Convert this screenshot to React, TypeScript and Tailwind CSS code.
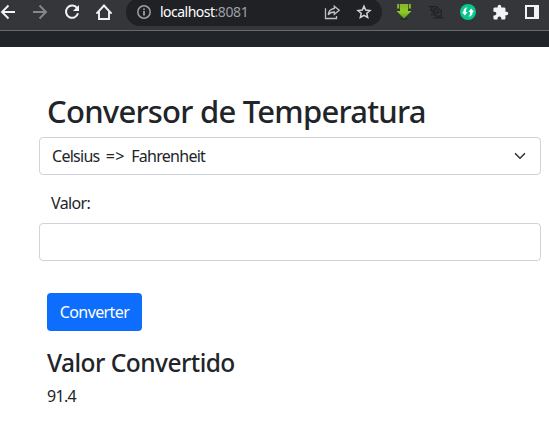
import type { ReactNode } from "react";

function Slot({ children }: { children: ReactNode }) {
  return <span className="flex h-6 w-8 shrink-0 items-center justify-center">{children}</span>;
}

function BackIcon({ className }: { className: string }) {
  return (
    <svg viewBox="0 0 16 16" className={className} fill="none" stroke="currentColor" strokeWidth="1.9">
      <path d="M15 8H2.2M8.5 1.5 2 8l6.5 6.5" />
    </svg>
  );
}

function ReloadIcon() {
  return (
    <svg viewBox="0 0 16 16" className="size-4 text-[#f1f3f4]" fill="none">
      <path d="M13.1 4.2A6.1 6.1 0 1 0 14 9.3" stroke="currentColor" strokeWidth="2" />
      <path d="M15 .9V7H8.9z" fill="currentColor" />
    </svg>
  );
}

function HomeIcon() {
  return (
    <svg viewBox="0 0 16 16" className="size-4 text-[#f1f3f4]" fill="none" stroke="currentColor" strokeWidth="1.9">
      <path d="M1.3 8.8H3V15h10V8.8h1.7L8 1.5z" />
    </svg>
  );
}

function InfoIcon() {
  return (
    <svg viewBox="0 0 16 16" className="size-4 text-[#9aa0a6]" fill="none" stroke="currentColor" strokeWidth="1.5">
      <circle cx="8" cy="8" r="6.2" />
      <path d="M8 7v4.5M8 4.5v1.6" strokeWidth="1.8" />
    </svg>
  );
}

function ShareIcon() {
  return (
    <svg viewBox="0 0 16 16" className="size-4 text-[#bdc1c6]" fill="none" stroke="currentColor" strokeWidth="1.3">
      <path d="M1.5 4.2v10.3h11v-2.5" />
      <path d="M10.3 2.2 15.2 6.2 10.3 10.3V8C7.5 8 5.6 8.8 4.2 10.9 4.5 7.5 6.6 5 10.3 4.5z" />
    </svg>
  );
}

function StarIcon() {
  return (
    <svg viewBox="0 0 16 16" className="size-4 text-[#d0d3d7]" fill="none" stroke="currentColor" strokeWidth="1.5">
      <path d="m8 2.2 1.7 3.9 4.3.4-3.2 2.8.9 4.2L8 11.3l-3.7 2.2.9-4.2L2 6.5l4.3-.4z" />
    </svg>
  );
}

function DownloadIcon() {
  return (
    <svg viewBox="0 0 16 16" className="size-4">
      <defs>
        <linearGradient id="leaf" x1="0" y1="0" x2="0" y2="1">
          <stop offset="0" stopColor="#86b52a" />
          <stop offset=".55" stopColor="#8fc928" />
          <stop offset="1" stopColor="#579f10" />
        </linearGradient>
      </defs>
      <ellipse cx="8" cy="14.7" rx="4" ry="1" fill="#28292c" />
      <path d="M1.2 0H3v4.6H1.2zM4 0h8v7h3.5L8 14.6.5 7H4zM13 0h1.8v4.6H13z" fill="url(#leaf)" />
      <path d="M3.5 0v5M12.5 0v5" stroke="#426b1c" strokeWidth=".8" />
    </svg>
  );
}

function SocketIcon() {
  return (
    <svg viewBox="0 0 16 16" className="size-4 text-[#202124]" fill="none" stroke="currentColor" strokeWidth="1.2">
      <path d="M.8 2.6H8l5.3 4.3v4.3M4.2 3.2 2.8 6.4l3.8 3.2M5 6.2l2.2-1.7L11 8l-2.2 1.7zM3 10.6h3.7l2 1.5h5M5.3 13.8h10" />
    </svg>
  );
}

function SyncIcon() {
  return (
    <svg viewBox="0 0 16 16" className="size-4">
      <circle cx="8" cy="8" r="8" fill="#0ac78e" />
      <path d="M7.4 3.2C4.6 3.6 3.1 5.7 3.3 8H1.9l2.9 3.5L7.6 8H6c-.1-1.8.1-3.2 1.4-4.8zM8.6 12.8c2.8-.4 4.3-2.5 4.1-4.8h1.4l-2.9-3.5L8.4 8H10c.1 1.8-.1 3.2-1.4 4.8z" fill="#fff" />
    </svg>
  );
}

function PuzzleIcon() {
  return (
    <svg viewBox="0 0 24 24" className="size-[17px] text-[#f1f3f4]" fill="currentColor">
      <path d="M20.5 11H19V7c0-1.1-.9-2-2-2h-4V3.5a2.5 2.5 0 0 0-5 0V5H4c-1.1 0-1.99.9-1.99 2v3.8H3.5c1.49 0 2.7 1.21 2.7 2.7s-1.21 2.7-2.7 2.7H2V20c0 1.1.9 2 2 2h3.8v-1.5c0-1.49 1.21-2.7 2.7-2.7s2.7 1.21 2.7 2.7V22H17c1.1 0 2-.9 2-2v-4h1.5a2.5 2.5 0 0 0 0-5z" />
    </svg>
  );
}

function Toolbar() {
  return (
    <header className="h-[31px] overflow-hidden border-b border-[#66686b] bg-[#35363a]">
      <div className="-ml-2 flex h-6 items-center">
        <Slot><BackIcon className="size-4 text-[#f1f3f4]" /></Slot>
        <Slot><BackIcon className="size-4 rotate-180 text-[#85878a]" /></Slot>
        <Slot><ReloadIcon /></Slot>
        <Slot><HomeIcon /></Slot>
        <div className="mx-1.5 flex h-7 w-64 shrink-0 items-center rounded-full bg-[#202124] px-0.5">
          <Slot><InfoIcon /></Slot>
          <span className="grow text-[14px] leading-5 tracking-[-0.52px] text-white">
            localhost<span className="tracking-[-0.4px] text-[#9aa0a6]">:8081</span>
          </span>
          <Slot><ShareIcon /></Slot>
          <Slot><StarIcon /></Slot>
        </div>
        <Slot><DownloadIcon /></Slot>
        <Slot><SocketIcon /></Slot>
        <Slot><SyncIcon /></Slot>
        <Slot><PuzzleIcon /></Slot>
        <Slot>
          <span className="flex h-3.5 w-3.5 justify-end border-2 border-[#f1f3f4]">
            <span className="w-[3px] bg-[#f1f3f4]" />
          </span>
        </Slot>
      </div>
    </header>
  );
}

export default function App() {
  return (
    <div className="h-[421px] overflow-hidden bg-white font-['Segoe_UI','Noto_Sans',sans-serif] text-[16px] leading-6 text-[#212529]">
      <Toolbar />
      <div className="h-4 bg-[#212529]" />
      <main className="pt-[45px] pr-2 pl-[39px]">
        <h1 className="ml-2 h-[38px] text-[31px] leading-[38px] font-medium tracking-[-0.75px] whitespace-nowrap">
          Conversor de Temperatura
        </h1>
        <div className="mt-[7px] flex h-[38px] items-center justify-between rounded-[4px] border border-[#ced4da] pr-3 pl-3">
          <span className="tracking-[-0.72px] [word-spacing:2.8px]">
            Celsius <span className="tracking-[0.4px]">=&gt;</span> Fahrenheit
          </span>
          <svg viewBox="0 0 16 16" className="h-3 w-4" fill="none" stroke="#343a40" strokeWidth="2.2" strokeLinecap="round" strokeLinejoin="round">
            <path d="m2 5 6 6 6-6" />
          </svg>
        </div>
        <label htmlFor="valor" className="mt-4 ml-3 block h-6 tracking-[-0.65px]">Valor:</label>
        <input id="valor" className="mt-2 block h-[38px] w-full rounded-[4px] border border-[#ced4da] px-3 outline-none" />
        <div className="ml-2">
          <button className="mt-8 block h-[38px] w-[95px] rounded-[4px] bg-[#0d6efd] text-center tracking-[-0.6px] text-white">
            Converter
          </button>
          <h2 className="mt-4 text-[24.5px] leading-[31px] font-medium tracking-[-0.53px]">Valor Convertido</h2>
          <p className="mt-1.5 tracking-[-0.7px]">91.4</p>
        </div>
      </main>
    </div>
  );
}
